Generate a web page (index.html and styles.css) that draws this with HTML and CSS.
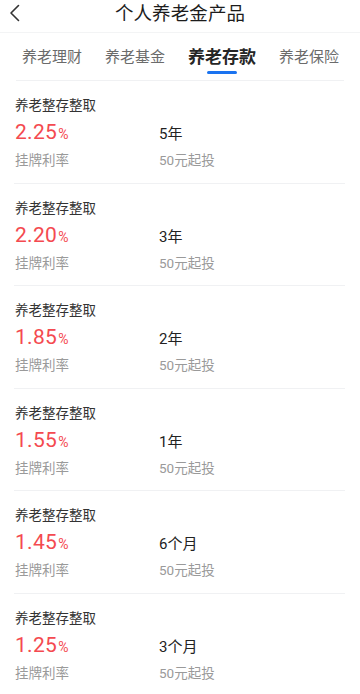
FILE: index.html
```html
<!DOCTYPE html>
<html lang="zh-CN">
<head>
<meta charset="utf-8">
<meta name="viewport" content="width=360">
<title>个人养老金产品</title>
<link rel="stylesheet" href="styles.css">
</head>
<body>
<header class="topbar">
  <svg class="back" width="12" height="18" viewBox="0 0 12 18"><polyline points="9.5,1.5 2,9 9.5,16.5" fill="none" stroke="#333" stroke-width="1.6" stroke-linecap="round" stroke-linejoin="round"/></svg>
  <h1 class="title">个人养老金产品</h1>
</header>
<nav class="tabs">
  <div class="tab">养老理财</div>
  <div class="tab">养老基金</div>
  <div class="tab active">养老存款<span class="bar"></span></div>
  <div class="tab">养老保险</div>
</nav>
<main class="list">
  <div class="item">
    <div class="name">养老整存整取</div>
    <div class="row"><div class="rate">2.25<span class="pct">%</span></div><div class="term">5年</div></div>
    <div class="row sub"><div class="lbl">挂牌利率</div><div class="lbl">50元起投</div></div>
  </div>
  <div class="item">
    <div class="name">养老整存整取</div>
    <div class="row"><div class="rate">2.20<span class="pct">%</span></div><div class="term">3年</div></div>
    <div class="row sub"><div class="lbl">挂牌利率</div><div class="lbl">50元起投</div></div>
  </div>
  <div class="item">
    <div class="name">养老整存整取</div>
    <div class="row"><div class="rate">1.85<span class="pct">%</span></div><div class="term">2年</div></div>
    <div class="row sub"><div class="lbl">挂牌利率</div><div class="lbl">50元起投</div></div>
  </div>
  <div class="item">
    <div class="name">养老整存整取</div>
    <div class="row"><div class="rate">1.55<span class="pct">%</span></div><div class="term">1年</div></div>
    <div class="row sub"><div class="lbl">挂牌利率</div><div class="lbl">50元起投</div></div>
  </div>
  <div class="item">
    <div class="name">养老整存整取</div>
    <div class="row"><div class="rate">1.45<span class="pct">%</span></div><div class="term">6个月</div></div>
    <div class="row sub"><div class="lbl">挂牌利率</div><div class="lbl">50元起投</div></div>
  </div>
  <div class="item last">
    <div class="name">养老整存整取</div>
    <div class="row"><div class="rate">1.25<span class="pct">%</span></div><div class="term">3个月</div></div>
    <div class="row sub"><div class="lbl">挂牌利率</div><div class="lbl">50元起投</div></div>
  </div>
</main>
</body>
</html>
```
FILE: styles.css
```css
* { box-sizing: border-box; }
html, body { margin: 0; padding: 0; background: #fff; }
body {
  font-family: Roboto, "Noto Sans CJK SC", "Noto Sans", sans-serif;
  color: #222;
  width: 360px;
  overflow: hidden;
}
.topbar {
  height: 33px;
  border-bottom: 1px solid #f3f4f5;
  display: flex;
  align-items: flex-start;
  justify-content: center;
  position: relative;
}
.back {
  position: absolute;
  left: 9px;
  top: 4px;
}
.title {
  margin: 0;
  font-size: 18.5px;
  font-weight: 400;
  line-height: 28px;
  color: #1c1c1c;
  letter-spacing: 0.1px;
}
.tabs {
  margin: 0 16px;
  height: 48px;
  border-bottom: 1px solid #f0f1f3;
  display: flex;
  padding-left: 6px;
  gap: 23px;
}
.tab {
  padding-top: 12px;
  font-size: 15px;
  line-height: 24px;
  color: #6b6b6b;
  display: flex;
  flex-direction: column;
  align-items: center;
  white-space: nowrap;
}
.tab.active {
  font-size: 17px;
  font-weight: 600;
  color: #262626;
}
.bar {
  margin-top: 2px;
  width: 30px;
  height: 3px;
  border-radius: 2px;
  background: #1a73f0;
}
.list {
  padding: 0 15px 0 14px;
}
.item {
  padding: 14px 0 12.6px 1px;
  border-bottom: 1px solid #f0f1f3;
}
.item.last { border-bottom: none; }
.name {
  font-size: 13.5px;
  line-height: 20px;
  color: #333;
}
.row {
  display: grid;
  grid-template-columns: 144px 1fr;
  align-items: baseline;
}
.row:not(.sub) { margin-top: 3px; height: 28px; }
.rate {
  font-size: 21px;
  line-height: 28px;
  color: #f44a50;
  font-weight: 400;
  letter-spacing: 0.3px;
}
.pct {
  font-size: 14px;
  margin-left: 1px;
}
.term {
  font-size: 15px;
  color: #222;
}
.sub { margin-top: 4px; }
.lbl {
  font-size: 13.5px;
  line-height: 20px;
  color: #9a9a9a;
}
```
